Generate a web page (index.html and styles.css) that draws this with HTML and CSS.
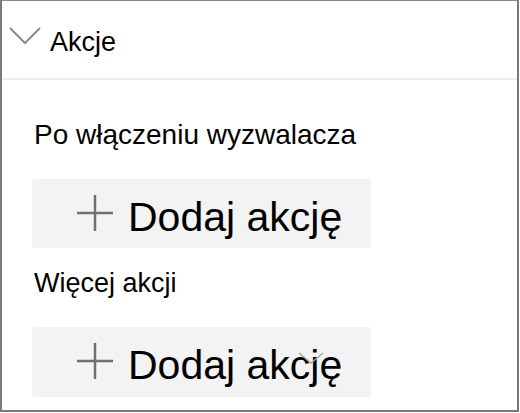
FILE: index.html
```html
<!DOCTYPE html>
<html lang="pl">
<head>
<meta charset="utf-8">
<link rel="stylesheet" href="styles.css">
</head>
<body>
<div class="frame">
  <div class="header">
    <svg class="chevron" width="32" height="18" viewBox="0 0 32 18"><polyline points="1,1 16,16 31,1" fill="none" stroke="#8c8c8c" stroke-width="2"/></svg>
    <span class="title">Akcje</span>
  </div>
  <div class="content">
    <div class="label first">Po włączeniu wyzwalacza</div>
    <div class="btn">
      <svg class="plus" width="36" height="36" viewBox="0 0 36 36"><path d="M18 0V36M0 18H36" stroke="#707070" stroke-width="2.5" fill="none"/></svg>
      <span class="btn-text">Dodaj akcję</span>
    </div>
    <div class="label second">Więcej akcji</div>
    <div class="btn last">
      <svg class="plus" width="36" height="36" viewBox="0 0 36 36"><path d="M18 0V36M0 18H36" stroke="#707070" stroke-width="2.5" fill="none"/></svg>
      <span class="btn-text">Dodaj akcję</span>
      <svg class="overlay" width="26" height="12" viewBox="0 0 26 12"><polyline points="1,1 13,11 25,1" fill="none" stroke="#a8a8a8" stroke-width="1.5"/></svg>
    </div>
  </div>
</div>
</body>
</html>
```
FILE: styles.css
```css
html, body {
  margin: 0;
  padding: 0;
  background: #ffffff;
}
body {
  font-family: "Liberation Sans", Arial, sans-serif;
  color: #000;
}
.frame {
  box-sizing: border-box;
  width: 519px;
  height: 412px;
  border-left: 2px solid #7a7a7a;
  border-top: 1px solid #8a8a8a;
  border-right: 2px solid #7a7a7a;
  border-bottom: 2px solid #7a7a7a;
  overflow: hidden;
}
.header {
  box-sizing: border-box;
  height: 79px;
  border-bottom: 2px solid #ededed;
  display: flex;
  align-items: flex-start;
  padding: 26px 0 0 7px;
}
.chevron {
  display: block;
  flex: none;
}
.title {
  font-size: 27px;
  line-height: 27px;
  margin-left: 9px;
  margin-top: 2px;
}
.content {
  padding: 41px 0 0 30px;
}
.label {
  font-size: 28px;
  line-height: 28px;
  padding-left: 2px;
}
.label.first {
  margin-bottom: 30px;
}
.label.second {
  margin-top: 21px;
  margin-bottom: 30px;
  font-size: 27px;
}
.btn {
  position: relative;
  box-sizing: border-box;
  width: 339px;
  height: 69px;
  background: #f3f3f3;
  border-radius: 3px;
  display: flex;
  align-items: flex-start;
  padding: 16px 0 0 45px;
}
.btn.last {
  height: 70px;
}
.plus {
  display: block;
  flex: none;
}
.btn-text {
  font-size: 41px;
  line-height: 41px;
  margin-left: 15px;
  margin-top: 2px;
  white-space: nowrap;
}
.overlay {
  position: absolute;
  left: 266px;
  top: 25px;
}
```
